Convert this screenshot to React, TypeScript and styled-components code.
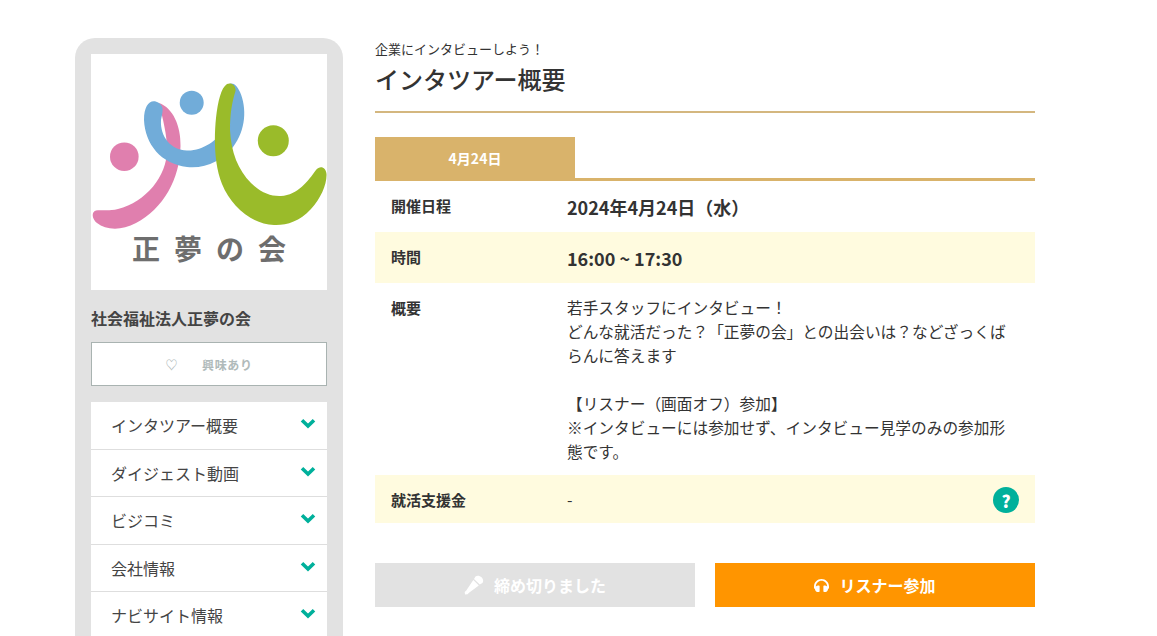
import React from "react";
import styled, { createGlobalStyle } from "styled-components";
import { FaHeadphones } from "react-icons/fa";

const Global = createGlobalStyle`
  html, body { margin: 0; height: 636px; overflow: hidden; background: #fff; }
  body { font-family: "Noto Sans CJK JP", "Noto Sans", sans-serif; color: #333; }
  * { box-sizing: border-box; }
`;

const Page = styled.div`
  display: flex;
  align-items: flex-start;
  gap: 32px;
  padding: 38px 0 0 75px;
`;
const Sidebar = styled.aside`
  flex: none;
  width: 268px;
  padding: 16px;
  background: #e2e2e2;
  border-radius: 20px;
  height: 640px;
`;
const LogoBox = styled.div`
  width: 236px;
  height: 236px;
  background: #fff;
  svg { display: block; }
`;
const OrgName = styled.div`
  margin-top: 16px;
  font-size: 16px;
  line-height: 24px;
  font-weight: 700;
  color: #444;
  height: 24px;
`;
const Interest = styled.div`
  margin-top: 12px;
  height: 44px;
  display: flex;
  align-items: center;
  justify-content: center;
  gap: 24px;
  background: #fff;
  border: 1px solid #a9b3b1;
  font-size: 12px;
  font-weight: 700;
  color: #b0baba;
  letter-spacing: 0.6px;
`;
const Menu = styled.ul`
  margin: 16px 0 0;
  padding: 0;
  list-style: none;
  background: #fff;
`;
const MenuItem = styled.li`
  height: 47.5px;
  padding: 0 11px 0 20px;
  display: flex;
  align-items: center;
  justify-content: space-between;
  font-size: 16px;
  color: #444;
  border-bottom: 1px solid #dedede;
  svg { display: block; margin-top: -3px; }
`;
const Main = styled.main`
  flex: none;
  width: 660px;
`;
const Sub = styled.div`
  font-size: 13px;
  line-height: 20px;
  height: 20px;
  margin-top: 1px;
`;
const Title = styled.h1`
  margin: 0;
  font-size: 24px;
  line-height: 36px;
  height: 52px;
  font-weight: 500;
  padding-top: 2px;
  border-bottom: 2px solid #d4b77f;
  height: 54px;
`;
const Tabs = styled.div`
  margin-top: 24px;
  height: 44px;
  border-bottom: 3px solid #d9b36b;
`;
const Tab = styled.div`
  width: 200px;
  height: 44px;
  background: #d9b36b;
  color: #fff;
  font-size: 14px;
  font-weight: 700;
  display: flex;
  align-items: center;
  justify-content: center;
  padding-bottom: 3px;
`;
const Row = styled.div<{ $tint?: boolean; $h: number }>`
  display: flex;
  min-height: ${(p) => p.$h}px;
  padding: 13px 16px 0;
  background: ${(p) => (p.$tint ? "#fffbdf" : "#fff")};
  position: relative;
`;
const Label = styled.div`
  flex: none;
  width: 176px;
  font-size: 15px;
  line-height: 24px;
  font-weight: 700;
`;
const Strong = styled.div`
  font-size: 18px;
  line-height: 26px;
  font-weight: 700;
`;
const Body = styled.div`
  font-size: 15.7px;
  line-height: 24px;
  white-space: pre-line;
`;
const Help = styled.div`
  position: absolute;
  right: 16px;
  top: 12px;
  width: 26px;
  height: 26px;
  border-radius: 50%;
  background: #00b09b;
  color: #fff;
  font-size: 17px;
  font-weight: 900;
  display: flex;
  align-items: center;
  justify-content: center;
`;
const Actions = styled.div`
  margin-top: 40px;
  display: flex;
  gap: 20px;
`;
const Action = styled.div<{ $bg: string }>`
  flex: 1;
  height: 44px;
  background: ${(p) => p.$bg};
  color: #fff;
  font-size: 16px;
  font-weight: 700;
  display: flex;
  align-items: center;
  justify-content: center;
  gap: 10px;
`;

const Chevron = () => (
  <svg width="16" height="11" viewBox="0 0 16 11">
    <path d="M2 2.2 L8 8 L14 2.2" fill="none" stroke="#00b09b" strokeWidth="3.6" />
  </svg>
);

const Logo = () => (
  <svg width="236" height="236" viewBox="0 0 236 236">
    <circle cx="33.3" cy="102.7" r="14.3" fill="#e07fae" />
    <circle cx="100.7" cy="48.7" r="12" fill="#71acd9" />
    <circle cx="182.3" cy="86.7" r="15.5" fill="#9abb2a" />
    <path
      fill="#e07fae"
      d="M68 49 C82 54 90 72 89.5 92 C89 125 72 155 45 169 C30 177 15 176 6 169 C1 165 0 158 5 156.5 C10 155.5 17 157.5 27 155 C55 148 76 122 76 96 C76 80 72 66 68 49 Z"
    />
    <path
      fill="#71acd9"
      d="M68 49 C74 53 71 60 70 66 C69 83 80 96 96 96.5 C112 97 126 86 133 76 C139 66 141 48 142 33 L138 30 C142 28 146 31 149 38 C156 54 155 76 142 93 C132 106 115 115 96 113 C70 110 54 90 53 66 C53 50 60 44 68 49 Z"
    />
    <path
      fill="#9abb2a"
      d="M136 30 C140 28 145 31 144.5 37 C141 48 139 60 139 76 C140 98 147 116 160 129 C170 139 180 142.5 190 142 C207 141 217 127 225 116 C229 111 235 113 235.5 120 C236 130 230 144 220 155 C208 168 195 171.5 183 171 C160 170 140 152 131 130 C123 110 123 84 125 64 C127 47 130 34 136 30 Z"
    />
    <text x="41" y="206" fontFamily="'Noto Sans CJK JP', sans-serif" fontSize="28" fontWeight="700" fill="#6e6e6e" letterSpacing="14">
      正夢の会
    </text>
  </svg>
);

const Mic = () => (
  <svg width="20" height="20" viewBox="0 0 20 20" fill="#fff">
    <path d="M11.5 1.5 C13 0 16 .6 17.6 2.3 C19.3 4 19.8 6.6 18.4 8 L15.8 9.6 L10 3.9 Z" />
    <path d="M9.3 5 L14.8 10.6 L5 17.8 L3.5 19.3 L1 19.5 L.7 17 L2.3 15.4 Z" />
  </svg>
);

const items = ["インタツアー概要", "ダイジェスト動画", "ビジコミ", "会社情報", "ナビサイト情報"];

export default function App() {
  return (
    <>
      <Global />
      <Page>
        <Sidebar>
          <LogoBox><Logo /></LogoBox>
          <OrgName>社会福祉法人正夢の会</OrgName>
          <Interest><span>♡</span><span>興味あり</span></Interest>
          <Menu>
            {items.map((t) => (
              <MenuItem key={t}>{t}<Chevron /></MenuItem>
            ))}
          </Menu>
        </Sidebar>
        <Main>
          <Sub>企業にインタビューしよう！</Sub>
          <Title>インタツアー概要</Title>
          <Tabs><Tab>4月24日</Tab></Tabs>
          <Row $h={51}>
            <Label>開催日程</Label>
            <Strong>2024年4月24日（水）</Strong>
          </Row>
          <Row $h={51} $tint>
            <Label>時間</Label>
            <Strong>16:00 ~ 17:30</Strong>
          </Row>
          <Row $h={192}>
            <Label>概要</Label>
            <Body>{"若手スタッフにインタビュー！\nどんな就活だった？「正夢の会」との出会いは？などざっくばらんに答えます\n\n【リスナー（画面オフ）参加】\n※インタビューには参加せず、インタビュー見学のみの参加形態です。"}</Body>
          </Row>
          <Row $h={48} $tint>
            <Label>就活支援金</Label>
            <Body>-</Body>
            <Help>?</Help>
          </Row>
          <Actions>
            <Action $bg="#e2e2e2"><Mic />締め切りました</Action>
            <Action $bg="#ff9500"><FaHeadphones size={15} />リスナー参加</Action>
          </Actions>
        </Main>
      </Page>
    </>
  );
}
